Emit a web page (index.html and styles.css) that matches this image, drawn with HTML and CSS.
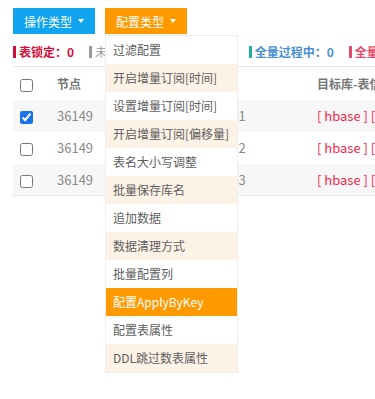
FILE: index.html
```html
<!DOCTYPE html>
<html lang="zh-CN">
<head>
  <meta charset="UTF-8" />
  <meta name="viewport" content="width=device-width, initial-scale=1.0"/>
  <title>同步任务</title>
  <link rel="stylesheet" href="styles.css">
</head>
<body>
  <div class="page">
    <div class="toolbar">
      <button class="btn btn-blue">操作类型 <span class="caret"></span></button>
      <div class="dropdown">
        <button class="btn btn-orange">配置类型 <span class="caret"></span></button>
        <ul class="menu">
          <li>过滤配置</li>
          <li>开启增量订阅[时间]</li>
          <li>设置增量订阅[时间]</li>
          <li>开启增量订阅[偏移量]</li>
          <li>表名大小写调整</li>
          <li>批量保存库名</li>
          <li>追加数据</li>
          <li>数据清理方式</li>
          <li>批量配置列</li>
          <li class="active">配置ApplyByKey</li>
          <li>配置表属性</li>
          <li>DDL跳过数表属性</li>
        </ul>
      </div>
    </div>

    <div class="stats">
      <span class="stat stat-red">表锁定：0</span>
      <span class="stat stat-grey">未开始增量订阅任务数：0</span>
      <span class="stat stat-blue">全量过程中：0</span>
      <span class="stat stat-pink">全量完成：0</span>
    </div>

    <div class="table-wrap">
      <table class="grid">
        <colgroup>
          <col class="c-check">
          <col class="c-node">
          <col class="c-name">
          <col class="c-target">
        </colgroup>
        <thead>
          <tr>
            <th><input type="checkbox"></th>
            <th>节点</th>
            <th>任务名称</th>
            <th>目标库-表信息</th>
          </tr>
        </thead>
        <tbody>
          <tr class="odd">
            <td><input type="checkbox" checked></td>
            <td>36149</td>
            <td>sync_task_001</td>
            <td><span class="tag">[ hbase ]</span> <span class="tag">[ user ]</span></td>
          </tr>
          <tr>
            <td><input type="checkbox"></td>
            <td>36149</td>
            <td>sync_task_002</td>
            <td><span class="tag">[ hbase ]</span> <span class="tag">[ log ]</span></td>
          </tr>
          <tr class="odd">
            <td><input type="checkbox"></td>
            <td>36149</td>
            <td>sync_task_003</td>
            <td><span class="tag">[ hbase ]</span> <span class="tag">[ order ]</span></td>
          </tr>
        </tbody>
      </table>
    </div>
  </div>
</body>
</html>
```

FILE: styles.css
```css
* { margin: 0; padding: 0; box-sizing: border-box; }

html, body { height: 100%; }

body {
  font-family: "Noto Sans CJK SC", "Noto Sans", sans-serif;
  font-size: 12px;
  color: #666;
  background: #fff;
}

.page {
  padding: 8px 0 0 13px;
  width: 100%;
  height: 399px;
  overflow: hidden;
}

.toolbar {
  display: flex;
  gap: 10px;
  height: 26px;
}

.btn {
  height: 26px;
  padding: 0 11px;
  border: none;
  color: #fff;
  font-family: inherit;
  font-size: 12px;
  display: flex;
  align-items: center;
  gap: 4px;
  cursor: pointer;
}

.btn-blue { background: #12a5ef; }
.btn-orange { background: #ff9900; }

.caret {
  width: 0;
  height: 0;
  border-left: 3.5px solid transparent;
  border-right: 3.5px solid transparent;
  border-top: 4px solid #fff;
  margin-left: 2px;
}

.dropdown {
  position: relative;
}

.menu {
  position: absolute;
  top: 27px;
  left: 0;
  width: 133px;
  list-style: none;
  background: #fff;
  border: 1px solid #eeeeee;
  z-index: 10;
}

.menu li {
  height: 28px;
  line-height: 28px;
  padding-left: 7px;
  color: #606060;
  white-space: nowrap;
}

.menu li:nth-child(even) { background: #fdf2e6; }

.menu li.active {
  background: #ff9900;
  color: #fff;
}

.stats {
  display: flex;
  align-items: center;
  height: 32px;
  padding-top: 3px;
  font-weight: bold;
  white-space: nowrap;
  overflow: hidden;
}

.stat {
  border-left: 3px solid;
  padding-left: 3px;
  line-height: 12px;
  margin-right: 15px;
}

.stat-red { color: #d0103a; border-color: #d0103a; }
.stat-grey { color: #999; border-color: #999; font-weight: normal; }
.stat-blue { color: #4a8fd0; border-color: #1db0a0; }
.stat-pink { color: #e8486c; border-color: #e8486c; }

.table-wrap {
  overflow: hidden;
}

.grid {
  border-collapse: collapse;
  table-layout: fixed;
  width: 560px;
  border-top: 1px solid #e6e6e6;
  border-bottom: 1px solid #e6e6e6;
}

.c-check { width: 37px; }
.c-node { width: 100px; }
.c-name { width: 160px; }

.grid th {
  height: 33px;
  text-align: left;
  font-weight: bold;
  color: #777;
  padding: 0 7px;
}

.grid td {
  height: 32px;
  padding: 0 7px;
  font-size: 13px;
  color: #8a8a8a;
  white-space: nowrap;
  overflow: hidden;
}

.grid tr.odd td { background: #f7f7f7; }

.grid input {
  width: 13px;
  height: 13px;
  vertical-align: middle;
  accent-color: #1a73e8;
}

.tag { color: #f5284a; }
```
